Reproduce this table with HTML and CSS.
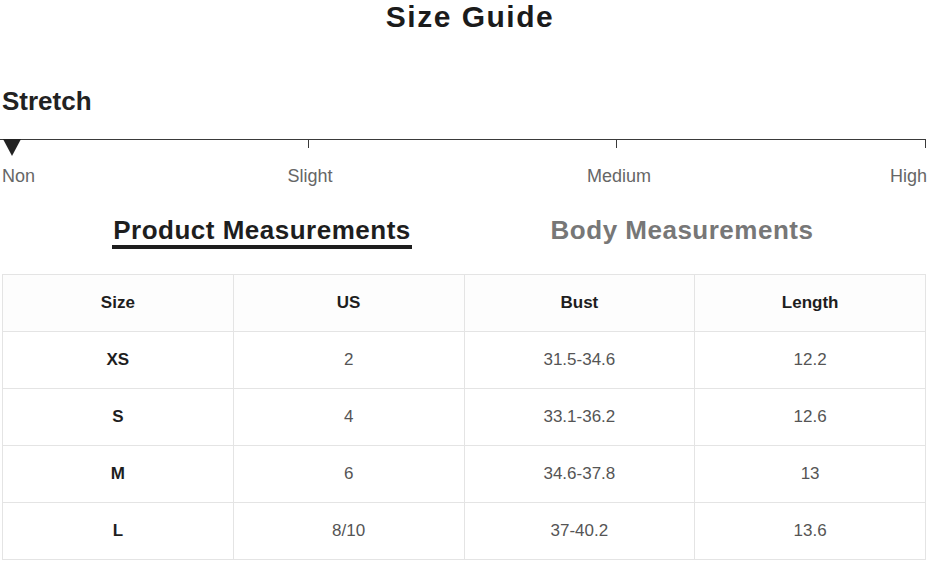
FILE: index.html
```html
<!DOCTYPE html>
<html>
<head>
<meta charset="utf-8">
<link rel="stylesheet" href="styles.css">
</head>
<body>
<div class="page">
  <h1 class="title">Size Guide</h1>
  <h2 class="stretch-title">Stretch</h2>
  <div class="scale">
    <div class="marker"></div>
    <div class="seg"></div>
    <div class="seg"></div>
    <div class="seg"></div>
  </div>
  <div class="scale-labels">
    <span class="lbl lbl-non">Non</span>
    <span class="lbl lbl-slight">Slight</span>
    <span class="lbl lbl-medium">Medium</span>
    <span class="lbl lbl-high">High</span>
  </div>
  <div class="tabs">
    <div class="tab"><span class="tab-text active">Product Measurements</span></div>
    <div class="tab"><span class="tab-text">Body Measurements</span></div>
  </div>
  <table class="sizes">
    <thead>
      <tr><th>Size</th><th>US</th><th>Bust</th><th>Length</th></tr>
    </thead>
    <tbody>
      <tr><td class="sz">XS</td><td>2</td><td>31.5-34.6</td><td>12.2</td></tr>
      <tr><td class="sz">S</td><td>4</td><td>33.1-36.2</td><td>12.6</td></tr>
      <tr><td class="sz">M</td><td>6</td><td>34.6-37.8</td><td>13</td></tr>
      <tr><td class="sz">L</td><td>8/10</td><td>37-40.2</td><td>13.6</td></tr>
    </tbody>
  </table>
</div>
</body>
</html>
```
FILE: styles.css
```css
* { box-sizing: border-box; }
html, body { margin: 0; padding: 0; background: #fff; }
body { font-family: "Liberation Sans", Arial, sans-serif; color: #1e1e1e; }
.page { width: 928px; }
.title {
  margin: 0;
  padding-left: 12px;
  text-align: center;
  font-size: 30px;
  line-height: 34px;
  font-weight: 700;
  letter-spacing: 1.5px;
  color: #1b1b1b;
}
.stretch-title {
  margin: 52px 0 0 2px;
  font-size: 26px;
  line-height: 30px;
  font-weight: 700;
  color: #222;
}
.scale {
  position: relative;
  margin-top: 23px;
  width: 926px;
  display: flex;
  height: 9px;
}
.seg {
  flex: 1;
  border-top: 1px solid #3a3a3a;
  border-right: 1px solid #3a3a3a;
}
.marker {
  position: absolute;
  left: 3px;
  top: 0;
  width: 0;
  height: 0;
  border-left: 9px solid transparent;
  border-right: 9px solid transparent;
  border-top: 17px solid #222;
}
.scale-labels {
  margin-top: 18px;
  width: 927px;
  display: grid;
  grid-template-columns: repeat(6, 1fr);
  font-size: 18px;
  line-height: 20px;
  color: #666;
}
.lbl-non { grid-column: 1; padding-left: 2px; }
.lbl-slight { grid-column: 2 / 4; text-align: center; padding-left: 2px; }
.lbl-medium { grid-column: 4 / 6; text-align: center; padding-left: 2px; }
.lbl-high { grid-column: 6; text-align: right; }
.tabs {
  margin-top: 29px;
  padding: 0 36px 0 52px;
  display: grid;
  grid-template-columns: 1fr 1fr;
}
.tab { text-align: center; }
.tab-text {
  display: inline-block;
  font-size: 26px;
  line-height: 30px;
  font-weight: 700;
  letter-spacing: 0.5px;
  color: #777;
  border-bottom: 4px solid transparent;
  padding: 0 1px;
}
.tab-text.active {
  color: #1e1e1e;
  border-bottom-color: #1e1e1e;
}
.sizes {
  margin: 25px 0 0 2px;
  width: 924px;
  border-collapse: collapse;
  table-layout: fixed;
}
.sizes th, .sizes td {
  border: 1px solid #e4e4e4;
  height: 57px;
  padding: 0;
  text-align: center;
  font-size: 17px;
}
.sizes th {
  font-weight: 700;
  color: #1e1e1e;
  background: #fdfdfd;
}
.sizes td { color: #555; background: #fff; }
.sizes td.sz { font-weight: 700; color: #1e1e1e; }
```
